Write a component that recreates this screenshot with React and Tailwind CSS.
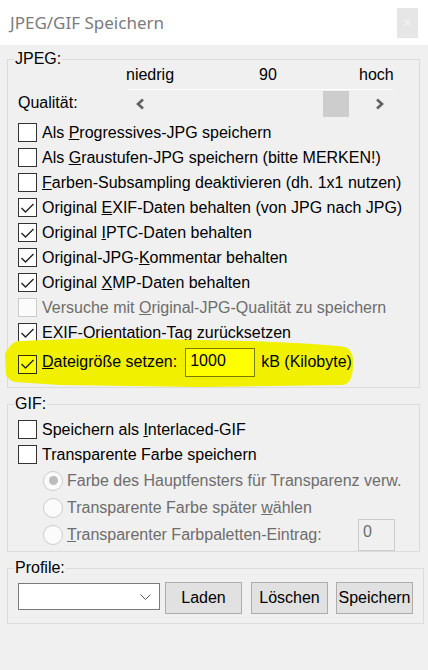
import clsx from 'clsx';

const font = { fontFamily: '"Liberation Sans", Arial, sans-serif' };

const Box = ({ checked, disabled, hl }) => (
  <span
    className={clsx(
      'w-[19px] h-[19px] border shrink-0 flex items-center justify-center',
      disabled && 'border-[#cccccc] bg-[#fbfbfb]',
      !disabled && !hl && 'border-[#333333] bg-white',
      hl && 'border-[#333300] bg-[#ffff00]'
    )}
  >
    {checked && (
      <svg width="15" height="12" viewBox="0 0 15 12">
        <polyline points="1.5,6 5.5,10 13.5,2" fill="none" stroke="#222" strokeWidth="1.4" />
      </svg>
    )}
  </span>
);

const Row = ({ checked, disabled, children }) => (
  <div className="h-[25px] flex items-center">
    <Box checked={checked} disabled={disabled} />
    <span className={clsx('ml-[5px] whitespace-nowrap', disabled ? 'text-[#6d6d6d]' : 'text-black')}>
      {children}
    </span>
  </div>
);

const Radio = ({ on, children }) => (
  <div className="flex items-center">
    <span className="ml-[25px] w-[20px] h-[20px] rounded-full border border-[#cccccc] bg-[#fbfbfb] shrink-0 flex items-center justify-center">
      {on && <span className="w-[9px] h-[9px] rounded-full bg-[#bcbcbc]" />}
    </span>
    <span className="ml-[4px] whitespace-nowrap text-[#6d6d6d]">{children}</span>
  </div>
);

const Group = ({ label, className, children }) => (
  <fieldset className={clsx('ml-[7px] mr-[8px] border border-[#dcdcdc] p-0', className)}>
    <legend className="ml-[6px] px-px leading-[18px] text-black">{label}</legend>
    <div className="px-[10px]">{children}</div>
  </fieldset>
);

const Btn = ({ children, className }) => (
  <div
    className={clsx(
      'w-[77px] h-[32px] shrink-0 bg-[#e1e1e1] border border-[#adadad] flex items-center justify-center',
      className
    )}
  >
    {children}
  </div>
);

const Chevron = ({ dir }) => (
  <svg width="9" height="12" viewBox="0 0 9 12">
    <polyline
      points={dir === 'left' ? '7,1.5 2,6 7,10.5' : '2,1.5 7,6 2,10.5'}
      fill="none"
      stroke="#606060"
      strokeWidth="2.6"
    />
  </svg>
);

export default function App() {
  return (
    <div className="w-[428px] h-[670px] bg-[#f0f0f0] text-[16px] overflow-hidden" style={font}>
      {/* Titelleiste */}
      <div className="h-[45px] bg-white flex items-center justify-between pl-[10px] pr-[10px]">
        <span
          className="text-[17px] text-[#7b7b7b] mt-[1px]"
          style={{ fontFamily: '"Noto Sans", "Open Sans", sans-serif' }}
        >
          JPEG/GIF Speichern
        </span>
        <div className="w-[21px] h-[30px] bg-[#e6e6e6] flex items-center justify-center">
          <svg width="7" height="7" viewBox="0 0 7 7">
            <path d="M0.5 0.5 L6.5 6.5 M6.5 0.5 L0.5 6.5" stroke="#fafafa" strokeWidth="1" />
          </svg>
        </div>
      </div>

      <Group label="JPEG:" className="mt-[5px] pb-[8px]">
        <div className="-mt-[2px] h-[18px] flex items-center leading-[18px]">
          <span className="ml-[108px] w-[133px]">niedrig</span>
          <span className="w-[100px]">90</span>
          <span>hoch</span>
        </div>
        <div className="mt-[5px] ml-[110px] w-[265px] h-px bg-white" />
        <div className="mt-[1px] h-[26px] flex items-center">
          <span className="w-[110px] -mt-[2px]">Qualität:</span>
          <div className="w-[265px] h-[26px] flex items-center">
            <span className="ml-[8px] flex">
              <Chevron dir="left" />
            </span>
            <span className="ml-[178px] w-[26px] h-[26px] bg-[#cdcdcd]" />
            <span className="ml-[26px] flex">
              <Chevron dir="right" />
            </span>
          </div>
        </div>
        <div className="mt-[3px]">
          <Row>
            Als <u>P</u>rogressives-JPG speichern
          </Row>
          <Row>
            Als <u>G</u>raustufen-JPG speichern (bitte MERKEN!)
          </Row>
          <Row>
            <u>F</u>arben-Subsampling deaktivieren (dh. 1x1 nutzen)
          </Row>
          <Row checked>
            Original <u>E</u>XIF-Daten behalten (von JPG nach JPG)
          </Row>
          <Row checked>
            Original <u>I</u>PTC-Daten behalten
          </Row>
          <Row checked>
            Original-JPG-<u>K</u>ommentar behalten
          </Row>
          <Row checked>
            Original <u>X</u>MP-Daten behalten
          </Row>
          <Row disabled>
            Versuche mit <u>O</u>riginal-JPG-Qualität zu speichern
          </Row>
          <Row checked>
            EXIF-<u>O</u>rientation-Tag zurücksetzen
          </Row>
          <div className="relative h-[34px] flex items-center">
            {/* Markierung mit Textmarker */}
            <svg
              className="absolute left-[-14px] top-[-9px]"
              width="356"
              height="54"
              viewBox="0 0 356 54"
            >
              <path
                d="M4 13 C8 7 12 5 16 5 L96 2 L246 5 C300 7 330 9 341 11 C349 14 350 24 349 30 C349 40 346 48 339 49 L196 51 L56 49 L11 46 C4 44 2 40 2 37 L1 20 C1 16 2 15 4 13 Z"
                fill="#f0f000"
              />
            </svg>
            <div className="relative flex items-center">
              <span className="mt-[4px] flex">
                <Box checked hl />
              </span>
              <span className="ml-[5px] whitespace-nowrap">
                <u>D</u>ateigröße setzen:
              </span>
              <span className="ml-[8px] w-[70px] h-[29px] border border-[#7a7a00] bg-[#ffff00] pl-[4px] leading-[24px]">
                1000
              </span>
              <span className="ml-[6px] whitespace-nowrap">kB (Kilobyte)</span>
            </div>
          </div>
        </div>
      </Group>

      <Group label="GIF:" className="mt-[7px] pb-[3px]">
        <div className="mt-[4px]">
          <Row>
            Speichern als <u>I</u>nterlaced-GIF
          </Row>
          <Row>Transparente Farbe speichern</Row>
          <div className="h-[27px] flex items-center">
            <Radio on>Farbe des Hauptfensters für Transparenz verw.</Radio>
          </div>
          <div className="h-[27px] flex items-center">
            <Radio>
              Transparente Farbe später <u>w</u>ählen
            </Radio>
          </div>
          <div className="h-[27px] flex items-center">
            <Radio>
              <u>T</u>ransparenter Farbpaletten-Eintrag:
            </Radio>
            <span className="ml-auto mr-[14px] w-[37px] h-[32px] shrink-0 border border-[#cccccc] bg-[#f0f0f0] pl-[4px] pt-[2px] text-[#6d6d6d] leading-[20px]">
              0
            </span>
          </div>
        </div>
      </Group>

      <Group label="Profile:" className="mt-[7px] pb-[9px]">
        <div className="mt-[5px] flex items-start">
          <div className="mt-[1px] w-[142px] h-[27px] shrink-0 bg-white border border-[#7a7a7a] flex items-center justify-end">
            <svg className="mr-[8px]" width="11" height="6" viewBox="0 0 11 6">
              <polyline points="0.5,0.5 5.5,5.5 10.5,0.5" fill="none" stroke="#555" strokeWidth="1" />
            </svg>
          </div>
          <Btn className="ml-[5px]">Laden</Btn>
          <Btn className="ml-[9px]">Löschen</Btn>
          <Btn className="ml-[8px]">Speichern</Btn>
        </div>
      </Group>
    </div>
  );
}
